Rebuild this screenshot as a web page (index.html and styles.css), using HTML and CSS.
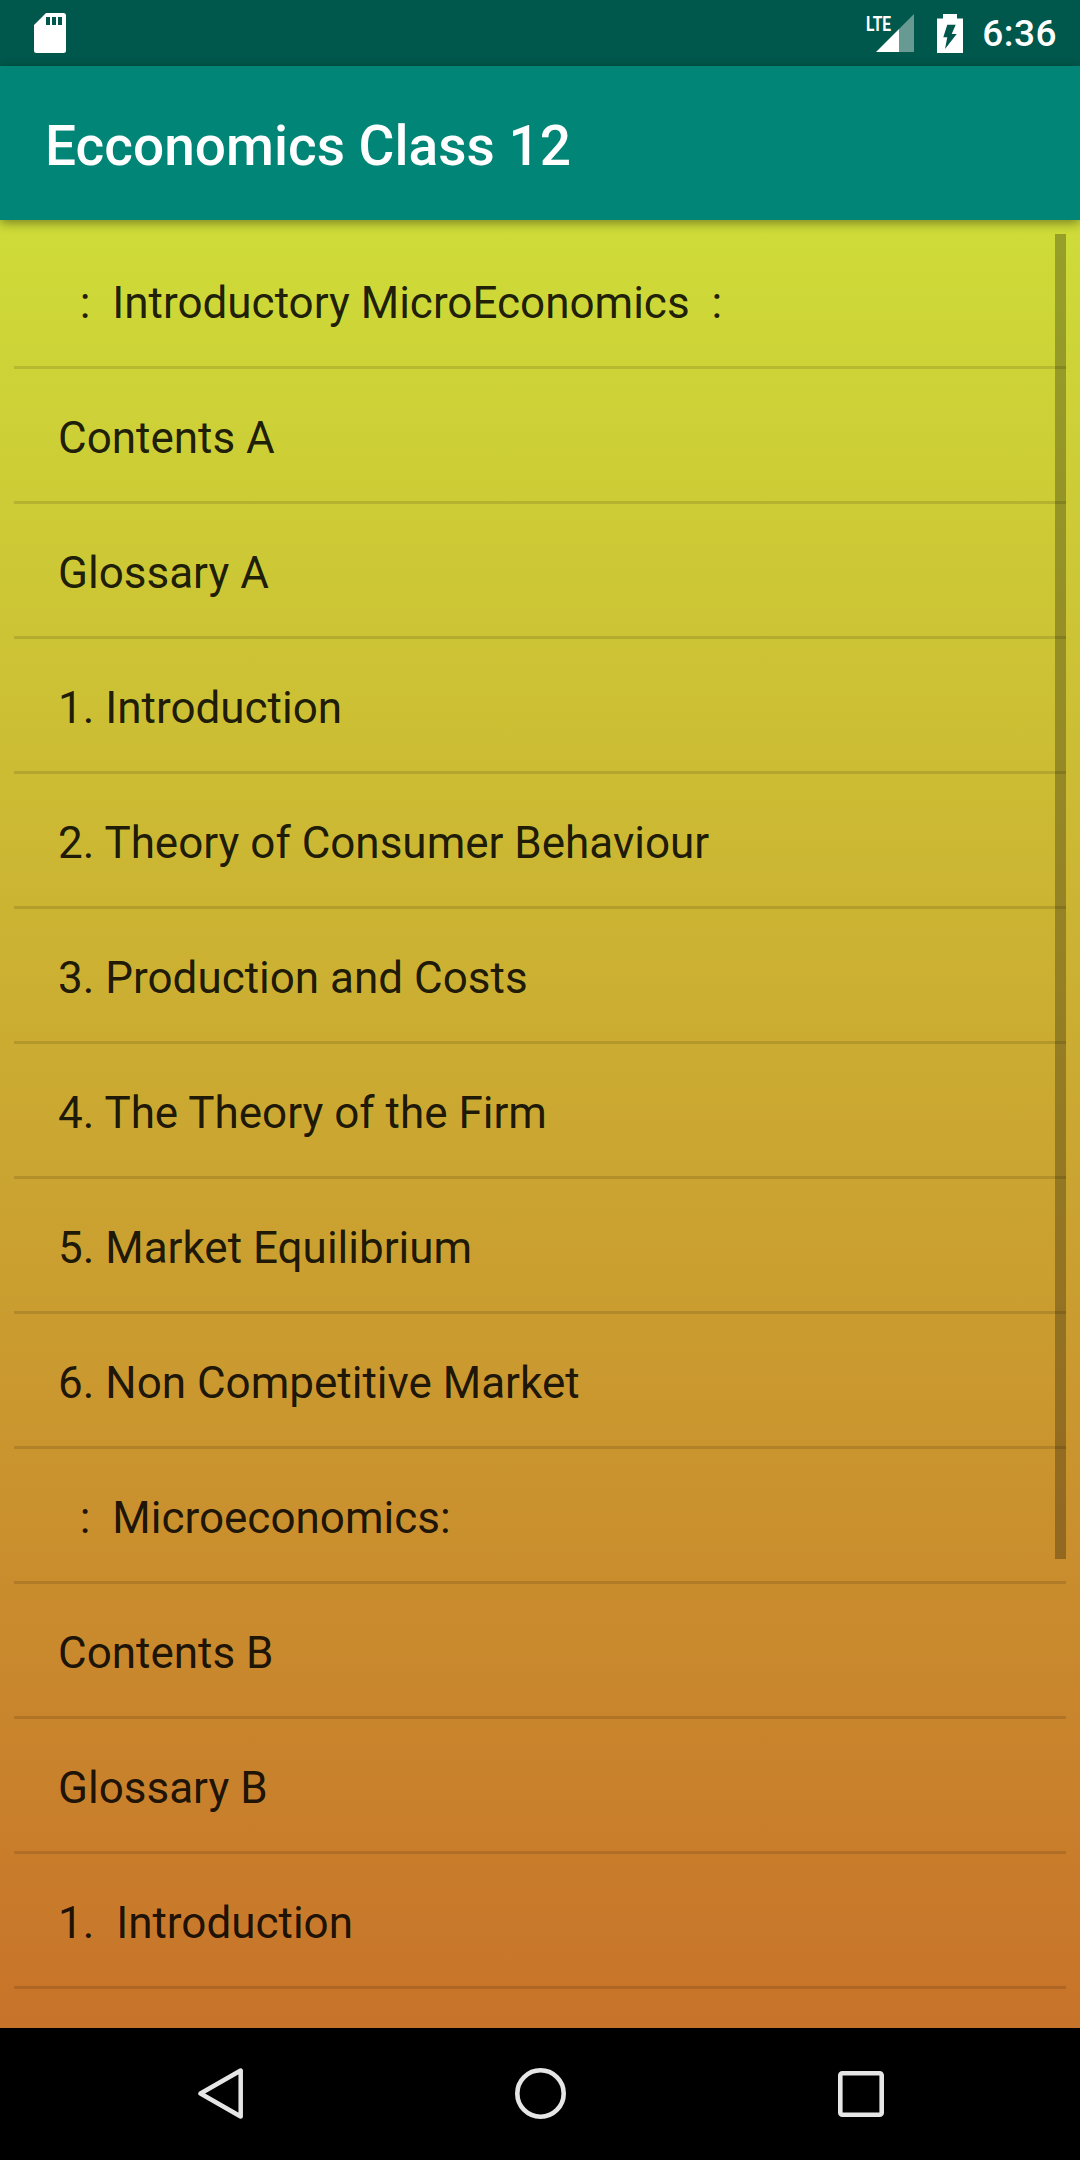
FILE: index.html
```html
<!DOCTYPE html>
<html>
<head>
<meta name="viewport" content="width=device-width, initial-scale=1.0">
<title>Ecconomics Class 12</title>
<link rel="stylesheet" href="styles.css">
</head>
<body>

<div class="phone">
  <div class="status-bar">
    <svg class="sd-icon" width="32" height="40" viewBox="0 0 32 40">
      <path fill-rule="evenodd" fill="#fff" d="M12 0H29.500Q32 0 32 2.500V37.500Q32 40 29.500 40H2.500Q0 40 0 37.500V12Z M12 4V12H16V4Z M18 4V12H22V4Z M24 4V12H28V4Z"/>
    </svg>
    <div class="status-right">
      <span class="lte">LTE</span>
      <svg class="signal-icon" width="38" height="38" viewBox="0 0 38 38">
        <path fill="#fff" fill-opacity="0.4" d="M23 15L38 0V38H23Z"/>
        <path fill="#fff" d="M0 38L23 15V38Z"/>
      </svg>
      <svg class="battery-icon" width="26" height="39" viewBox="0 0 26 39">
        <path fill-rule="evenodd" fill="#fff" d="M6 0H20V4.500H26V39H0V4.500H6Z M10.300 10.700L6.300 23.300H10.300L8 35L19.700 20H14.700L18.700 10.700Z"/>
      </svg>
      <span class="clock">6:36</span>
    </div>
  </div>

  <div class="app-bar">Ecconomics Class 12</div>

  <div class="content">
    <ul class="chapters">
      <li>&nbsp; :&nbsp; Introductory MicroEconomics&nbsp; :</li>
      <li>Contents A</li>
      <li>Glossary A</li>
      <li>1. Introduction</li>
      <li>2. Theory of Consumer Behaviour</li>
      <li>3. Production and Costs</li>
      <li>4. The Theory of the Firm</li>
      <li>5. Market Equilibrium</li>
      <li>6. Non Competitive Market</li>
      <li>&nbsp; :&nbsp; Microeconomics:</li>
      <li>Contents B</li>
      <li>Glossary B</li>
      <li>1.&nbsp; Introduction</li>
    </ul>
    <div class="scroll-thumb"></div>
  </div>

  <div class="nav-bar">
    <svg class="nav-back" width="45" height="51" viewBox="0 0 45 51">
      <path fill="none" stroke="#e6e6e6" stroke-width="4.500" stroke-linejoin="round" d="M42.700 2.500V48.500L2.500 25.500Z"/>
    </svg>
    <svg class="nav-home" width="51" height="51" viewBox="0 0 51 51">
      <circle cx="25.500" cy="25.500" r="23.200" fill="none" stroke="#e6e6e6" stroke-width="4.600"/>
    </svg>
    <svg class="nav-recent" width="46" height="46" viewBox="0 0 46 46">
      <rect x="2.300" y="2.300" width="41.400" height="41.400" rx="2" fill="none" stroke="#e6e6e6" stroke-width="4.600"/>
    </svg>
  </div>
</div>

</body>
</html>
```

FILE: styles.css
```css
* {
  box-sizing: border-box;
}

body {
  margin: 0;
  font-family: Roboto, sans-serif;
}

.phone {
  width: 1080px;
  height: 2160px;
  display: flex;
  flex-direction: column;
  overflow: hidden;
}

.status-bar {
  height: 66px;
  flex: none;
  background-color: #00574b;
  display: flex;
  align-items: center;
  justify-content: space-between;
  padding: 0 23px 0 34px;
}

.status-right {
  display: flex;
  align-items: center;
}

/* squeezed, the real glyphs are narrower than Roboto Bold */
.lte {
  color: #ffffff;
  font-size: 21px;
  font-weight: 700;
  width: 25px;
  margin-top: -19px;
  white-space: nowrap;
  transform: scaleX(0.74);
  transform-origin: left center;
}

.signal-icon {
  margin: 0 0 0 -15px;
}

.battery-icon {
  margin-left: 23px;
}

.clock {
  color: #ffffff;
  font-size: 37px;
  font-weight: 500;
  margin-left: 19px;
  letter-spacing: 0.5px;
}

.app-bar {
  height: 154px;
  flex: none;
  background-color: #008577;
  color: #ffffff;
  font-size: 55px;
  font-weight: 500;
  padding: 6px 0 0 45px;
  display: flex;
  align-items: center;
  box-shadow: 0 3px 10px rgba(0, 0, 0, 0.4);
  position: relative;
  z-index: 1;
}

.content {
  flex: 1;
  position: relative;
  overflow: hidden;
  background: linear-gradient(#cedc38, #c8732a);
  padding: 14px 14px 0;
}

.chapters {
  list-style: none;
  margin: 0;
  padding: 0;
}

.chapters li {
  height: 135px;
  padding: 6px 0 0 44px;
  display: flex;
  align-items: center;
  border-bottom: 3px solid rgba(0, 0, 0, 0.12);
  color: rgba(0, 0, 0, 0.87);
  font-size: 44px;
  white-space: pre;
}

.scroll-thumb {
  position: absolute;
  top: 14px;
  right: 14px;
  width: 11px;
  height: 1325px;
  background-color: rgba(0, 0, 0, 0.27);
}

.nav-bar {
  height: 132px;
  flex: none;
  background-color: #000000;
  display: flex;
  align-items: center;
  padding: 0 0 1px 198px;
}

.nav-home {
  margin-left: 272px;
}

.nav-recent {
  margin-left: 272px;
}
```
